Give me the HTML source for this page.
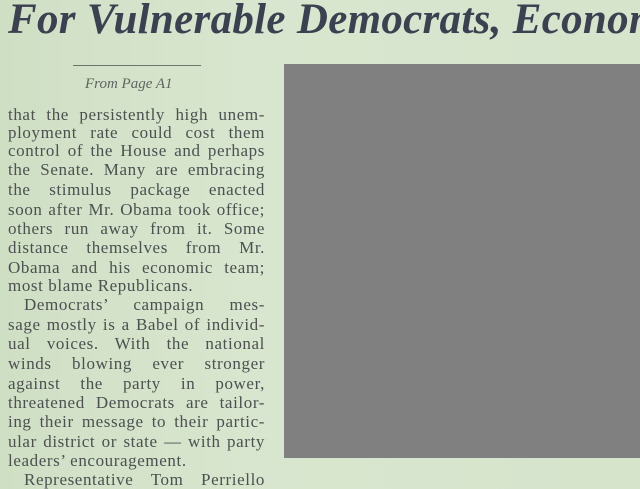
<!DOCTYPE html>
<html><head><meta charset="utf-8"><style>
html,body{margin:0;padding:0}
body{width:640px;height:480px;overflow:hidden;position:relative;background:linear-gradient(90deg,#cfdfc4 0%,#d9e6cf 40%,#d6e4cc 100%);font-family:"Liberation Serif",serif;}
.h{position:absolute;left:8px;top:-5px;font-size:43px;font-weight:bold;font-style:italic;color:#3c4152;white-space:nowrap;letter-spacing:0.3px}
.rule{position:absolute;left:73px;top:65px;width:128px;height:1px;background:#6f7468}
.fp{position:absolute;left:85px;top:76px;font-size:15px;font-style:italic;color:#5f6460}
.l{position:absolute;left:8px;width:257px;font-size:17px;line-height:18px;letter-spacing:0.6px;color:#4c5050;text-align:justify;text-align-last:justify;white-space:nowrap}
.e{text-align-last:left}
.gray{position:absolute;left:284px;top:64px;width:356px;height:394px;background:#808080}
</style></head><body>
<div class="h">For Vulnerable Democrats, Econom</div>
<div class="rule"></div>
<div class="fp">From Page A1</div>
<div class="l" style="top:106px">that the persistently high unem-</div>
<div class="l" style="top:124px">ployment rate could cost them</div>
<div class="l" style="top:142px">control of the House and perhaps</div>
<div class="l" style="top:161px">the Senate. Many are embracing</div>
<div class="l" style="top:181px">the stimulus package enacted</div>
<div class="l" style="top:201px">soon after Mr. Obama took office;</div>
<div class="l" style="top:220px">others run away from it. Some</div>
<div class="l" style="top:239px">distance themselves from Mr.</div>
<div class="l" style="top:259px">Obama and his economic team;</div>
<div class="l e" style="top:277px">most blame Republicans.</div>
<div class="l" style="top:296px;left:24px;width:241px">Democrats’ campaign mes-</div>
<div class="l" style="top:316px">sage mostly is a Babel of individ-</div>
<div class="l" style="top:335px">ual voices. With the national</div>
<div class="l" style="top:355px">winds blowing ever stronger</div>
<div class="l" style="top:375px">against the party in power,</div>
<div class="l" style="top:394px">threatened Democrats are tailor-</div>
<div class="l" style="top:413px">ing their message to their partic-</div>
<div class="l" style="top:433px">ular district or state — with party</div>
<div class="l e" style="top:452px">leaders’ encouragement.</div>
<div class="l" style="top:471px;left:24px;width:241px">Representative Tom Perriello</div>
<div class="gray"></div>
</body></html>
